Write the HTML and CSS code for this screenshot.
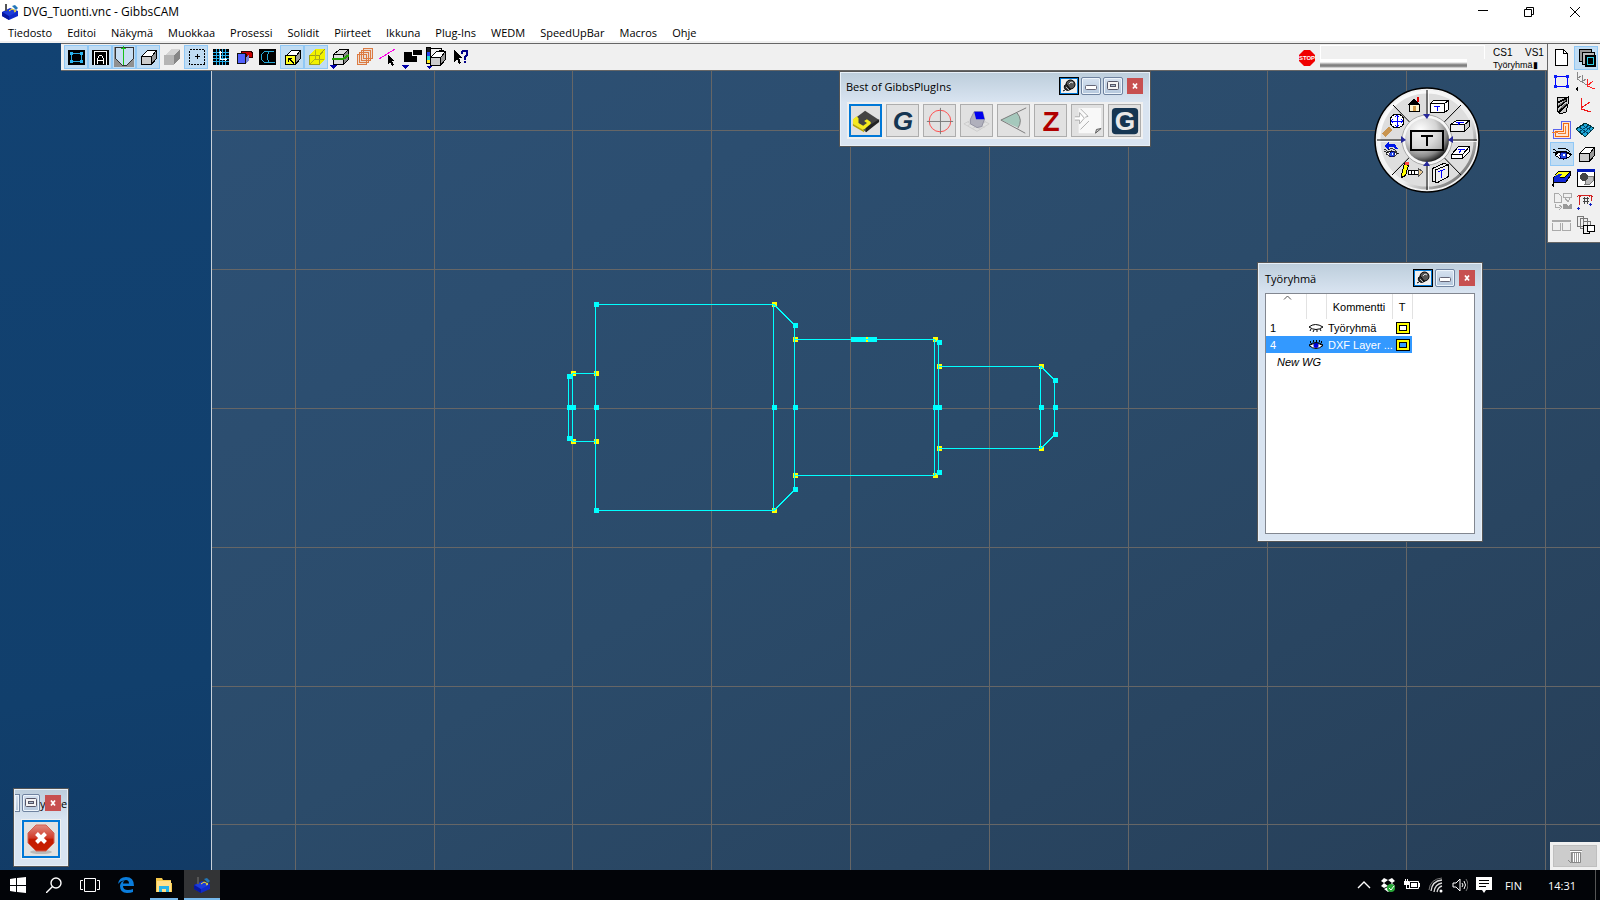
FILE: index.html
```html
<!DOCTYPE html>
<html lang="fi">
<head>
<meta charset="utf-8">
<title>DVG_Tuonti.vnc - GibbsCAM</title>
<link rel="stylesheet" href="styles.css">
</head>
<body>
<svg class="defs" aria-hidden="true">
  <defs>
    <radialGradient id="ball" cx="35%" cy="28%" r="75%"><stop offset="0" stop-color="#fff"/><stop offset=".5" stop-color="#d4d4d4"/><stop offset=".8" stop-color="#888"/><stop offset="1" stop-color="#222"/></radialGradient>
    <linearGradient id="ring" x1="0" y1="0" x2="1" y2="1"><stop offset="0" stop-color="#fff"/><stop offset=".6" stop-color="#eee"/><stop offset="1" stop-color="#444"/></linearGradient>
    <linearGradient id="red" x1="0" y1="0" x2="0" y2="1"><stop offset="0" stop-color="#e08a80"/><stop offset=".5" stop-color="#d03a28"/><stop offset=".55" stop-color="#c41a00"/><stop offset="1" stop-color="#c82000"/></linearGradient>
    <symbol id="pin" viewBox="0 0 16 14"><circle cx="9.500" cy="5.500" r="4.500" fill="#555" stroke="#000"/><path d="M3.500 6.500q-1 4 3 5l3-1-4-5z" fill="#333" stroke="#000"/><path d="M8 5l2-2 2 1" stroke="#ddd" fill="none"/><path d="M5 8l3 3" stroke="#bbb"/><path d="M2 12l2-1" stroke="#000"/></symbol>
    <symbol id="min" viewBox="0 0 16 14"><rect x="2.500" y="6.500" width="11" height="4" rx="1" fill="#fff" stroke="#667"/></symbol>
    <symbol id="max" viewBox="0 0 16 14"><rect x="2.500" y="2.500" width="11" height="8" rx="1" fill="#f4f4f4" stroke="#556"/><rect x="5.500" y="5.500" width="5" height="2" fill="#abc" stroke="#556"/></symbol>
    <symbol id="x" viewBox="0 0 16 16"><path d="M6 5.500l4 5M10 5.500l-4 5" stroke="#fff" stroke-width="1.700"/></symbol>
    <symbol id="cube" viewBox="0 0 24 24"><path d="M5.500 11.500l6-6h9v8l-5 6h-10z" fill="#fff" stroke="#000"/><path d="M15.500 11.500v8l5-6v-8z" fill="#999" stroke="#000"/><path d="M5.500 11.500h10v8h-10z" fill="#ccc" stroke="#000"/></symbol>
    <symbol id="eye" viewBox="0 0 24 24"><path d="M5 13q7-6 16 0q-7 8-16 0z" fill="#fff" stroke="#000"/><path d="M3 7l5 3M3 10l4 1M5 12q8-6 17 1M8 7q8-2 12 3" fill="none" stroke="#000"/><circle cx="13.500" cy="13.500" r="3.500" fill="#2448e8" stroke="#000060"/><path d="M13 12h2v2h-2z" fill="#fff"/></symbol>
    <symbol id="app" viewBox="0 0 16 16"><path d="M0 8l8-4 8 3v5l-9 4-7-4z" fill="#102ac8"/><path d="M0 8l7 4v4l-7-4z" fill="#0818a0"/><path d="M1 8l7-3 7 3-8 4z" fill="#1c3cd8"/><path d="M7 7l3-2 4 2-2 1" fill="none" stroke="#ffe62a"/><path d="M3 0h2v7H3z" fill="#555"/><path d="M10 2l3-1 3 3-2 2z" fill="#2377b8"/></symbol>
    <symbol id="box" viewBox="0 0 22 16"><path d="M1.500 6.500l6-4h13v6l-5 5h-14z" fill="#fff" stroke="#000"/><path d="M1.500 6.500h14v7h-14z" fill="#eee" stroke="#000"/><path d="M15.500 6.500l5-4v6l-5 5z" fill="#ccc" stroke="#000"/></symbol>
  </defs>
</svg>

<header class="titlebar">
  <svg class="app-icon" viewBox="0 0 16 16"><use href="#app"/></svg>
  <h1>DVG_Tuonti.vnc - GibbsCAM</h1>
  <div class="window-controls">
    <button aria-label="Minimize"><svg viewBox="0 0 12 12"><path d="M1 4.500h10" stroke="#000"/></svg></button>
    <button aria-label="Restore"><svg viewBox="0 0 12 12"><path d="M1.500 3.500h7v7h-7zM3.500 3V1.500h7v7H9" fill="none" stroke="#000"/></svg></button>
    <button aria-label="Close"><svg viewBox="0 0 12 12"><path d="M1 1l10 10M11 1L1 11" stroke="#000"/></svg></button>
  </div>
</header>
<nav class="menubar">
  <button>Tiedosto</button><button>Editoi</button><button>Näkymä</button><button>Muokkaa</button><button>Prosessi</button><button>Solidit</button><button>Piirteet</button><button>Ikkuna</button><button>Plug-Ins</button><button>WEDM</button><button>SpeedUpBar</button><button>Macros</button><button>Ohje</button>
</nav>

<main class="workspace">
  <svg class="drawing" aria-label="Part geometry" shape-rendering="crispEdges">
    <g transform="translate(-212,-43)">
      <path class="grid" d="M295.500 43v900M434.500 43v900M572.500 43v900M711.500 43v900M850.500 43v900M989.500 43v900M1128.500 43v900M1267.500 43v900M1406.500 43v900M1545.500 43v900M211 130.500h1500M211 269.500h1500M211 408.500h1500M211 547.500h1500M211 686.500h1500M211 824.500h1500"/>
      <path class="yellow" d="M571 371h5v5h-5zM594 371h5v5h-5zM571 439h5v5h-5zM594 439h5v5h-5zM772 302h5v5h-5zM772 508h5v5h-5zM793 337h5v5h-5zM793 473h5v5h-5zM933 337h5v5h-5zM933 473h5v5h-5zM937 364h5v5h-5zM937 446h5v5h-5zM1039 364h5v5h-5zM1039 446h5v5h-5z"/>
      <path class="geo" d="M595.500 304v207M595 304.500h179M595 510.500h179M773.500 304v207M774 304.500l21 21M774 510.500l21-21M794.500 325v165M795 339.500h140M795 475.500h140M934.500 339v137M938.500 342v131M934 339.500l4 3M934 475.500l4-3M939 366.500h102M939 448.500h102M1040.500 366v83M1041 366.500l14 14M1041 448.500l14-14M1054.500 380v55M572 373.500h23M572 441.500h23M572.500 373v69M568.500 376v63"/>
      <path class="cyan" d="M594 302h5v5h-5zM594 508h5v5h-5zM594 405h5v5h-5zM567 374h5v5h-5zM567 436h5v5h-5zM567 405h9v5h-9zM772 405h5v5h-5zM793 323h5v5h-5zM793 405h5v5h-5zM793 487h5v5h-5zM851 337h26v5h-26zM933 405h9v5h-9zM937 340h5v5h-5zM937 470h5v5h-5zM1039 405h5v5h-5zM1053 405h5v5h-5zM1053 378h5v5h-5zM1053 432h5v5h-5z"/>
      <path class="yellow" d="M866 337h2v2h-2zM866 340h2v2h-2z"/>
    </g>
  </svg>

  <div class="toolbar">
    <div class="tools">
      <button class="on" aria-label="Workgroup"><svg viewBox="0 0 24 24"><path d="M4 5h17v15H4z"/><path d="M7.500 8.500h10v8h-10z" fill="none" stroke="#2aa9e0"/><path d="M6 7h3v3H6zM16 7h3v3h-3zM6 15h3v3H6zM16 15h3v3h-3z" fill="#2ab4f0"/></svg></button>
      <button class="on" aria-label="Labels"><svg viewBox="0 0 24 24"><path d="M4 5h17v15H4z"/><path d="M6.500 20V6.500h12V20M9.500 19v-5l2-4h2l2 4v5M9.500 15.500h6" fill="none" stroke="#fff"/></svg></button>
      <button class="on" aria-label="Coordinate grid"><svg viewBox="0 0 24 24"><path d="M2 2h20v20H2z" fill="#909090"/><path d="M3.500 2.500v11l7 7h4l7-7v-11z" fill="#c8def2" stroke="#333"/><path d="M11.500 1v19M9 3.500h5" stroke="#18c018"/></svg></button>
      <button class="on" aria-label="Solid"><svg viewBox="0 0 24 24"><use href="#cube"/></svg></button>
      <button aria-label="Shaded"><svg viewBox="0 0 24 24"><path d="M4 11l7-7h9v9l-6 6H4z" fill="#d4d4d4"/><path d="M14 10l6-6v9l-6 7z" fill="#868686"/><path d="M4 10h10v10H4z" fill="#b5b5b5"/></svg></button>
      <button class="on" aria-label="Select area"><svg viewBox="0 0 24 24"><path d="M5.500 4.500h15v15h-15z" fill="none" stroke="#000" stroke-dasharray="2 1"/><path d="M11 11.500h5M13.500 9v5" stroke="#000"/></svg></button>
      <button aria-label="Grid"><svg viewBox="0 0 24 24"><path d="M5 4h16v16H5z"/><path d="M8.500 4v16M11.500 4v16M14.500 4v16M17.500 4v16M5 7.500h16M5 10.500h16M5 13.500h16M5 16.500h16" stroke="#28aee8"/><path d="M12.500 6v8.500h6M11 7.500h3M17.500 13v3" fill="none" stroke="#fff"/></svg></button>
      <button aria-label="Profile"><svg viewBox="0 0 24 24"><path d="M9.500 6.500h10l1 2v4h-6v-3h-5z" fill="#c80000" stroke="#300"/><path d="M5.500 8.500h8v10h-8z" fill="#5261ff" stroke="#111"/><path d="M14 12l3-2v5l-3 3" fill="#7b83d8"/></svg></button>
      <button aria-label="Toolpath"><svg viewBox="0 0 24 24"><path d="M3 4h17v16H3z"/><path d="M11 6.500H8.500L5.500 9.500v5l3 3h10M17.500 6.500h-4l-2 3v5l2 3M11 6.500h3" fill="none" stroke="#2aa9d8"/></svg></button>
      <button class="on" aria-label="Face select"><svg viewBox="0 0 24 24"><use href="#cube"/><path d="M5.500 10.500h10v9h-10z" fill="#ff2" stroke="#000"/><path d="M8 13h4v1h-2l4 4-1 1-4-4v2H8z"/></svg></button>
      <button class="on" aria-label="Edge select"><svg viewBox="0 0 24 24"><path d="M5 10l6-6h10v10l-6 6H5z" fill="#f2f200"/><path d="M5.500 10.500h10v9h-10zM15.500 10.500l5-6" fill="none" stroke="#a0a018"/><path d="M11.500 5v9h8M11 14l-5 5" fill="none" stroke="#b0b020"/></svg></button>
      <button aria-label="Slice"><svg viewBox="0 0 24 24"><path d="M5.500 9.500l6-5h9v10l-5 5h-10z" fill="#ddd" stroke="#000"/><path d="M15.500 9.500l5-5v10l-5 5z" fill="#888" stroke="#000"/><path d="M5 9.500h10" stroke="#000"/><path d="M4 14h11l6-4" fill="none" stroke="#20a000" stroke-width="2"/><path d="M1 20h8l-4 4z" fill="#0000a8"/></svg></button>
      <button aria-label="Layers"><svg viewBox="0 0 24 24"><path d="M11.500 3.500h9v10h-9zM9.500 5.500h9v10h-9zM7.500 7.500h9v10h-9zM5.500 9.500h9v10h-9z" fill="#e7c9b8" fill-opacity=".5" stroke="#dc7b42"/></svg></button>
      <button aria-label="Line select"><svg viewBox="0 0 24 24"><path d="M3 14L19 4" stroke="#ff00e8"/><path d="M12 10v9l2-2 2 4 2-1-2-4h3z"/></svg></button>
      <button aria-label="Blocks"><svg viewBox="0 0 24 24"><path d="M4 7h13v10H4zM13 5h9v5h-9z"/><path d="M12.500 5v5.500H17" fill="none" stroke="#fff"/><path d="M1 20h8l-4 4z" fill="#0000a8"/></svg></button>
      <button aria-label="Solid colors"><svg viewBox="0 0 24 24"><g transform="translate(1 1)"><use href="#cube" width="24" height="24"/></g><path d="M2.500 2.500h4v16h-4z" fill="#fff" stroke="#000"/><path d="M3 3h3v4H3z" fill="#222"/><path d="M3 7h3v4H3z" fill="#24e"/><path d="M3 11h3v4H3z" fill="#2dd"/><path d="M3 15h3v3H3z" fill="#fe2"/><path d="M7 3.500h10v2M15 5h5l-2 2z" fill="none" stroke="#000"/><path d="M2 21h6l-3 3z" fill="#0000a8"/></svg></button>
      <button aria-label="Help"><svg viewBox="0 0 24 24"><path d="M6 5v12l3-3 2 5 2-1-2-5h4z"/><path d="M14 9V7l1-1h4v4l-2 2v3M17 16v2" fill="none" stroke="#000088" stroke-width="2"/></svg></button>
    </div>
    <div class="status">
      <button class="stop" aria-label="Stop"><svg viewBox="0 0 16 16"><path d="M5 0h6l5 5v6l-5 5H5l-5-5V5z" fill="#f00000"/><text x="8" y="10" text-anchor="middle">STOP</text></svg></button>
      <div class="progress"><div class="progress-field"></div><div class="progress-bar"></div></div>
      <div class="coords"><span>CS1</span><span>VS1</span><strong>Työryhmä▮</strong></div>
    </div>
  </div>

  <aside class="palette">
    <button aria-label="New"><svg viewBox="0 0 24 24"><path d="M5.500 3.500h8l4 4v12h-12z" fill="#fff" stroke="#000"/><path d="M13.500 3.500v4h4" fill="none" stroke="#000"/></svg></button>
    <button class="on" aria-label="Workgroups"><svg viewBox="0 0 24 24"><path d="M5.500 3.500h12v3h-9v9h-3z" fill="#999" stroke="#000"/><path d="M8.500 6.500h12v3h-9v9h-3z" fill="#bbb" stroke="#000"/><path d="M11 9h11v12H11z"/><path d="M13.500 11.500h6v7h-6z" fill="none" stroke="#2ad0e8"/></svg></button>
    <button aria-label="Geometry"><svg viewBox="0 0 24 24"><path d="M5.500 6.500h12v10h-12z" fill="none" stroke="#00f"/><path d="M4 5h3v3H4zM16 5h3v3h-3zM4 15h3v3H4zM16 15h3v3h-3z" fill="#0a1cf8"/></svg></button>
    <button aria-label="Coordinate systems"><svg viewBox="0 0 24 24"><path d="M3.500 2v7l4 3M3 9l4-3M8.500 5v7l4 3M8 12l4-3" fill="none" stroke="#888"/><path d="M13.500 9v7l7 3M13 16l6-5" fill="none" stroke="#f22"/><path d="M4 16v5l-3-2z"/></svg></button>
    <button aria-label="Tools"><svg viewBox="0 0 24 24"><path d="M7 4l11-1v7l-2 8-6 2-3-4z" fill="#ccc" stroke="#000"/><path d="M7 9l10-5M7 14l10-8M9 18l8-8" stroke="#000" stroke-width="2" fill="none"/><path d="M8 12l8-6M9 16l8-7" stroke="#777" fill="none"/></svg></button>
    <button aria-label="Coordinate system"><svg viewBox="0 0 24 24"><path d="M7.500 4v11l9 3M7 14l9-6" fill="none" stroke="#f01818"/></svg></button>
    <button aria-label="Processes"><svg viewBox="0 0 24 24"><path d="M11.500 3.500h9v17h-17v-9h8z" fill="#ffe5d0" stroke="#5a64ec"/><path d="M13.500 5.500h5v13h-13v-5h8z" fill="none" stroke="#f06a10"/><path d="M2 14.500h6M15.500 8v7.500H8" fill="none" stroke="#f08030"/></svg></button>
    <button aria-label="Surface"><svg viewBox="0 0 24 24"><path d="M2 11l9-6 9 5-9 9z" fill="#20a8d8" stroke="#033"/><path d="M5 9l10 7M8 7l10 6M5 14l10-7M8 16l10-8" fill="none" stroke="#046"/></svg></button>
    <button class="on" aria-label="View"><svg viewBox="0 0 24 24"><use href="#eye"/></svg></button>
    <button aria-label="Solids"><svg viewBox="0 0 24 24"><use href="#cube"/></svg></button>
    <button aria-label="Machining"><svg viewBox="0 0 24 24"><path d="M3.500 11.500l5-6h12v4l-5 7h-12z" fill="#1228d8" stroke="#000"/><path d="M5 10l3-4h12l-5 5h-5l2-3H9z" fill="#ff1"/><path d="M10 11h5l5-5" fill="none" stroke="#000"/><path d="M4 16v5l-3-2z"/></svg></button>
    <button aria-label="Render"><svg viewBox="0 0 24 24"><path d="M3.500 3.500h17v17h-17z" fill="#fff" stroke="#000"/><path d="M3 3h18v3H3z" fill="#0018b8"/><path d="M12 12l2-2h5v5l-3 3h-5z" fill="#bbb" stroke="#777"/><circle cx="10" cy="11" r="4" fill="#444"/></svg></button>
    <button disabled aria-label="Post"><svg viewBox="0 0 24 24"><path d="M4.500 3.500h4l3 3v6h-7zM13.500 3.500h8v4h-8zM15 8l3 4 2-4M5.500 14v3H10M9 15l3 2-3 3" fill="none" stroke="#aaa"/><path d="M13 14h3l2 2 2-2h2v5h-9z" fill="#999"/></svg></button>
    <button aria-label="Measure"><svg viewBox="0 0 24 24"><path d="M5.500 15V5.500h12V11M3 7l2-2 2 2M15 7l2-2 2 2" fill="none" stroke="#d02020"/><path d="M9 8.500h6M9 11.500h6M10.500 7v7M13.500 7v7" stroke="#444" fill="none"/><path d="M3 18.500h3M4.500 17v3M15 14.500h3M16.500 13v3" stroke="#1020c0"/></svg></button>
    <button disabled aria-label="Tile"><svg viewBox="0 0 24 24"><path d="M2 6h19v2H2z" fill="#aaa"/><path d="M2.500 9v7.500h8V9M12.500 9v7.500h8V9" fill="none" stroke="#aaa"/></svg></button>
    <button aria-label="Parts"><svg viewBox="0 0 24 24"><path d="M3.500 2.500h6v10h-6zM6.500 4.500h7v10h-7zM9.500 7.500h7v9h-7z" fill="#eee" stroke="#777"/><path d="M9.500 11.500h6v8h-6z" fill="#eee" stroke="#000"/><path d="M13.500 11.500h7v6h-7z" fill="#fff" stroke="#000"/></svg></button>
  </aside>

  <svg class="wheel" viewBox="0 0 106 106" role="img" aria-label="View wheel">
    <circle cx="53" cy="53" r="52" fill="#f2f2f2" stroke="#000" stroke-width="1.500"/>
    <circle cx="53" cy="53" r="48" fill="#dedede" stroke="url(#ring)" stroke-width="3"/>
    <path d="M53 3v100M3 53h100M19 18l68 70M87 18L18 88" stroke="#000"/>
    <path d="M54.500 3v100M3 54.500h100" stroke="#fff" opacity=".8"/>
    <circle cx="53" cy="53" r="25" fill="#f6f6f6" stroke="#aaa"/>
    <circle cx="53" cy="53" r="22" fill="url(#ball)"/>
    <path d="M37 44h32v19H37z" fill="#ddd" fill-opacity=".5" stroke="#000" stroke-width="2"/>
    <path d="M47 49h12M53 48v11" stroke="#000" stroke-width="2"/>
    <g fill="#26289a"><path d="M49 27h7l-3 5zM49 79h7l-3-5zM27 49v7l5-3zM79 49v7l-5-3z"/></g>
    <g shape-rendering="crispEdges">
      <path d="M33 18l7-6 7 6z"/><path d="M35.500 17.500h10v7h-10z" fill="#fff6d0" stroke="#000"/><path d="M39 19h3v5h-3z" fill="#d8a050"/><path d="M43 10h2v5h-2z" fill="#d00"/>
      <path d="M8 46l7-6 3 3-7 7z" fill="#c99550"/><circle cx="23" cy="34" r="7" fill="#fff" stroke="#000"/><path d="M17 34.500h12M23.500 28v12M19 32l-2 2 2 2M27 32l2 2-2 2M21 30l2-2 2 2M21 38l2 2 2-2" stroke="#00f" fill="none"/>
      <path d="M10 59l5-4v2h6l3 5h-3l-2-2h-4v3z" fill="#0018e8"/><use href="#eye" x="8" y="57" width="18" height="18"/>
      <path d="M27.500 87.500l3-11 4 2-3 10-4 2z" fill="#ff0" stroke="#000"/><path d="M31 75h4v3h-4z" fill="#f44"/><path d="M34.500 83.500h10v4h-10z" fill="#fff" stroke="#000"/><path d="M37.500 84v3M40.500 84v3" stroke="#000"/><path d="M44 81l5 4-5 5z" fill="#e8c890" stroke="#555"/>
      <path d="M56.500 16.500l3-3h15v9l-4 3h-14z" fill="#fff" stroke="#000"/><path d="M56.500 16.500h14v9M70.500 16.500l4-3" fill="none" stroke="#000"/>
      <use href="#box" x="75" y="31" width="22" height="16"/>
      <path d="M77.500 67.500l7-8h11v5l-7 7h-11zM77.500 67.500h11v4M88.500 67.500l7-8" fill="#fff" stroke="#000"/>
      <path d="M58.500 81.500l11-5 5 1v12l-11 6-5-1zM61.500 95V83l12-5" fill="#eee" stroke="#000"/>
      <path d="M60 19.500h6M63.500 19v5M82 35.500h8M86 35l-2 3M84 62.500h7M88 62l-3 4M64 85l7-3M67.500 84v7" stroke="#00f" fill="none"/>
    </g>
  </svg>

  <section class="panel plugins" aria-labelledby="plugins-title">
    <header class="panel-head"><h2 id="plugins-title">Best of GibbsPlugIns</h2>
      <button class="pin" aria-label="Pin"><svg viewBox="0 0 16 14"><use href="#pin"/></svg></button>
      <button class="cap" aria-label="Minimize"><svg viewBox="0 0 16 14"><use href="#min"/></svg></button>
      <button class="cap" aria-label="Maximize"><svg viewBox="0 0 16 14"><use href="#max"/></svg></button>
      <button class="close" aria-label="Close"><svg viewBox="0 0 16 16"><use href="#x"/></svg></button>
    </header>
    <div class="plugin-row">
      <button class="current" aria-label="Pocket"><svg viewBox="0 0 32 32"><path d="M2 15L15 5l15 10-14 13z" fill="#444"/><path d="M16 28v-5l14-9v3z" fill="#222"/><path d="M2 14l4-3 2 2v5l5 3 4-3-3-2 3-2 4 3v2l-7 6h-2L2 19z" fill="#f5ea20"/><path d="M2 19v2l12 7v-2z" fill="#b8a800"/></svg></button>
      <button aria-label="Gibbs"><svg viewBox="0 0 32 32"><text class="g italic" x="16" y="26" text-anchor="middle">G</text></svg></button>
      <button aria-label="Center"><svg viewBox="0 0 32 32"><circle cx="16" cy="16" r="11.500" fill="none" stroke="#ff4848"/><path d="M2 16.500h28M16.500 2v28" stroke="#777"/></svg></button>
      <button aria-label="Box face"><svg viewBox="0 0 32 32"><path d="M2 19l14-7 13 7-13 8zM6 17l14 8M10 15l14 8M6 21l14-7M11 24l14-7" fill="none" stroke="#ccc"/><path d="M9 14l4-8h9l2 8-3 8-5 1-7-4z" fill="#b0b0bc" stroke="#9090a0"/><path d="M13 6h9l2 8H15z" fill="#0000ee"/></svg></button>
      <button aria-label="Angle"><svg viewBox="0 0 32 32"><path d="M2 15l17-8q7 8 1 16z" fill="#a5c8bc"/><path d="M29 2L2 15l26 14M19 7q7 8 1 17" fill="none" stroke="#777"/></svg></button>
      <button aria-label="Z"><svg viewBox="0 0 32 32"><text class="z" x="16" y="27" text-anchor="middle">Z</text></svg></button>
      <button aria-label="Convert"><svg viewBox="0 0 32 32"><path d="M6 2h24v22l-5 5H6z" fill="#f8f8f8"/><path d="M24 29l1-4 5-1z" fill="#ccc" stroke="#555"/><path d="M2 11.500h5V7l5 6-5 6v-4H2M8 3l8 8-3 1M8 25l9-9" fill="#fff" stroke="#aaa"/></svg></button>
      <button aria-label="Gibbs G"><svg viewBox="0 0 32 32"><rect x="2" y="2" width="28" height="28" rx="4" fill="#153552"/><text class="g light" x="16" y="26" text-anchor="middle">G</text></svg></button>
    </div>
  </section>

  <section class="panel workgroups" aria-labelledby="wg-title">
    <header class="panel-head"><h2 id="wg-title">Työryhmä</h2>
      <button class="pin" aria-label="Pin"><svg viewBox="0 0 16 14"><use href="#pin"/></svg></button>
      <button class="cap" aria-label="Minimize"><svg viewBox="0 0 16 14"><use href="#min"/></svg></button>
      <button class="close" aria-label="Close"><svg viewBox="0 0 16 16"><use href="#x"/></svg></button>
    </header>
    <div class="list">
      <table>
        <colgroup><col class="c-num"><col class="c-eye"><col class="c-name"><col class="c-type"></colgroup>
        <thead><tr><th aria-label="Number"><svg class="sort" viewBox="0 0 9 5"><path d="M1 4.500l3.500-3.500L8 4.500" fill="none" stroke="#555"/></svg></th><th aria-label="Visible"></th><th>Kommentti</th><th>T</th></tr></thead>
        <tbody>
          <tr><td>1</td><td><svg class="mini-eye" viewBox="0 0 16 10"><path d="M1 4q6-5 14 0q-7 5-14 0zM3 6L2 8M6 7L5 9M9 7v2M12 6l1 2" fill="#fff" stroke="#000"/></svg></td><td>Työryhmä</td><td><span class="tag"></span></td></tr>
          <tr class="selected"><td>4</td><td><svg class="mini-eye" viewBox="0 0 16 10"><path d="M1 5.500q7-4 14 0q-7 6-14 0z" fill="#fff" stroke="#000"/><path d="M2.500 3V1M5.500 2V0M8.500 2V0M11.500 2V0M13.500 3V1M1 5q7-5 14 0" stroke="#000" fill="none"/><circle cx="8" cy="5.500" r="2.500" fill="#00d"/></svg></td><td>DXF Layer ...</td><td><span class="tag"></span></td></tr>
          <tr class="new"><td colspan="4">New WG</td></tr>
        </tbody>
      </table>
    </div>
  </section>

  <section class="panel mini" aria-label="Macro">
    <header class="panel-head">
      <button class="cap cut" aria-label="Minimize"></button>
      <button class="cap" aria-label="Maximize"><svg viewBox="0 0 16 14"><use href="#max"/></svg></button>
      <span>y</span>
      <button class="close" aria-label="Close"><svg viewBox="0 0 16 16"><use href="#x"/></svg></button>
      <span>e</span>
    </header>
    <button class="cancel" aria-label="Cancel"><svg viewBox="0 0 30 30"><ellipse cx="15" cy="28" rx="11" ry="2" fill="#bbb"/><path d="M10 1h10l8 8v10l-8 8H10l-8-8V9z" fill="url(#red)" stroke="#d46050"/><path d="M10.500 9.500l9 9M19.500 9.500l-9 9" stroke="#fff" stroke-width="4"/></svg></button>
  </section>

  <div class="trash"><button aria-label="Trash" disabled><svg viewBox="0 0 16 16"><path d="M4.500 4.500h9v10h-9z" fill="#999" stroke="#888"/><path d="M3 2.500h12M1 12l3 3" fill="none" stroke="#888"/><path d="M3 3.500h12M6.500 5v9M8.500 5v9M10.500 5v9M12.500 5v9" stroke="#fff"/></svg></button></div>
</main>

<footer class="taskbar">
  <div class="tasks">
    <button aria-label="Start"><svg viewBox="0 0 16 16"><path d="M0 2l6-1v7H0zM7 1l9-1v8H7zM0 9h6v6l-6-1zM7 9h9v7l-9-1z" fill="#fff"/></svg></button>
    <button aria-label="Search"><svg viewBox="0 0 16 16"><circle cx="10" cy="6" r="5" fill="none" stroke="#fff" stroke-width="1.400"/><path d="M6.500 9.500L0 16" stroke="#fff" stroke-width="1.400"/></svg></button>
    <button aria-label="Task view"><svg class="wide" viewBox="0 0 20 16"><path d="M4.500 1.500h11v13h-11zM3 3.500H.500v9H3M17 3.500h2.500v9H17" fill="none" stroke="#fff"/></svg></button>
    <button aria-label="Edge"><svg viewBox="0 0 16 16"><path d="M0 7Q1 0 8 0q8 0 8 9H5q0 4 5 4 3 0 5-1v3q-2 1-6 1-7 0-7-7 0-4 5-6Q2 4 0 7zM5 6.500h6Q11 3 8 3 5.500 3 5 6.500z" fill="#0a7ddc"/></svg></button>
    <button class="running" aria-label="File explorer"><svg viewBox="0 0 16 16"><path d="M0 1h6l1 2h8v3h1v9H0z" fill="#f5c84b"/><path d="M1 4h14v11H1z" fill="#ffe08a"/><path d="M3 15V9h10v6h-3v-3H6v3z" fill="#26b4ea"/></svg></button>
    <button class="running active" aria-label="GibbsCAM"><svg viewBox="0 0 16 16"><use href="#app"/></svg></button>
  </div>
  <div class="tray">
    <svg class="chev" viewBox="0 0 14 16"><path d="M1 11l6-6 6 6" fill="none" stroke="#fff" stroke-width="1.400"/></svg>
    <svg viewBox="0 0 16 16"><path d="M4 1l4 2-4 3-3-2zM12 1l3 3-3 2-4-3zM4 6l4 3-4 2-3-2zM12 6l3 3-3 2-4-2zM4 12l4-2 4 2-4 3z" fill="#fff"/><circle cx="11" cy="11" r="4" fill="#28a838"/><path d="M9 11l2 2 3-4" stroke="#fff" fill="none"/></svg>
    <svg viewBox="0 0 16 16"><path d="M5.500 4.500h9v7h-9z" fill="none" stroke="#fff"/><path d="M7 6h6v4H7zM15 6h1v4h-1zM0 4h5v4H3v3h3v1H2V8H0zM1 2h1v3H1zM3 2h1v3H3z" fill="#fff"/></svg>
    <svg viewBox="0 0 16 16"><path d="M3 14Q4 4 14 3M6 15q1-8 8-9M9 15q1-5 5-6" fill="none" stroke="#ddd" stroke-width="1.300"/><path d="M1 13Q2 2 14 1" fill="none" stroke="#777"/><circle cx="13" cy="14" r="1.500" fill="#fff"/></svg>
    <svg viewBox="0 0 16 16"><path d="M1 6h3l4-4v12l-4-4H1z" fill="none" stroke="#fff"/><path d="M10 6q2 2 0 4M12 4q3 4 0 8" fill="none" stroke="#fff"/><path d="M14 2q4 6 0 12" fill="none" stroke="#777"/></svg>
    <svg viewBox="0 0 16 16"><path d="M0 0h16v13h-6l-2 3-2-3H0z" fill="#fff"/><path d="M3 3.500h10M3 6.500h10M3 9.500h7" stroke="#000"/></svg>
    <span class="lang">FIN</span><time>14:31</time>
  </div>
</footer>
</body>
</html>
```
FILE: styles.css
```css
* { box-sizing: border-box; }

body {
  margin: 0;
  min-height: 100vh;
  display: flex;
  flex-direction: column;
  overflow: hidden;
  background: #fff;
  color: #000;
  font-family: "Open Sans", "Noto Sans", sans-serif;
  font-size: 11px;
}

button {
  margin: 0;
  padding: 0;
  border: 0;
  background: none;
  color: inherit;
  font: inherit;
  display: flex;
  align-items: center;
  justify-content: center;
}

svg { display: block; flex: none; }
h1, h2 { margin: 0; font-size: inherit; font-weight: 400; }
.defs { position: absolute; width: 0; height: 0; }

/* Title and menu */
.titlebar { display: flex; align-items: center; height: 23px; padding-left: 2px; }
.titlebar h1 { font-size: 12px; }
.app-icon { width: 16px; height: 16px; margin-right: 5px; }
.window-controls { display: flex; margin-left: auto; padding-right: 2px; }
.window-controls button { width: 46px; height: 18px; }
.window-controls svg { width: 12px; height: 12px; }
.menubar { display: flex; gap: 15px; height: 20px; padding-left: 8px; border-bottom: 2px solid #f0f0f0; }

/* Workspace */
.workspace {
  position: relative;
  flex: 1;
  padding-left: 61px;
  background: linear-gradient(170deg, #124272, #113f6c 60%, #13365f);
}
.drawing {
  position: absolute;
  left: 211px;
  top: 0;
  width: calc(100% - 211px);
  height: 100%;
  border-left: 1px solid #c8d0d8;
  background: linear-gradient(150deg, #2d5176, #2b4b6a 50%, #273f58);
}
.grid { fill: none; stroke: #666; }
.geo { fill: none; stroke: #0ff; }
.cyan { fill: #0ff; }
.yellow { fill: #ff0; }

.toolbar {
  position: relative;
  display: flex;
  height: 28px;
  margin-right: 53px;
  padding: 1px 0 0 3px;
  border-top: 1px solid #666;
  border-bottom: 1px solid #666;
  background: #f0f0f0;
}
.tools { display: flex; }
.tools button, .palette button { width: 24px; height: 24px; }
.tools svg, .palette svg { width: 24px; height: 24px; overflow: visible; shape-rendering: crispEdges; }
.tools .on, .palette .on { background: #c0dcf3; box-shadow: inset 0 0 0 1px #90c8f6; }
.status { display: flex; margin-left: auto; }
.stop { width: 16px; height: 16px; margin: 5px 5px 0 0; }
.stop svg { width: 16px; height: 16px; }
.stop text { fill: #fff; font: 700 6px "Liberation Sans", sans-serif; }
.progress { width: 173px; }
.progress-field { width: 165px; height: 14px; border: solid #fff; border-width: 1px 1px 0 1px; }
.progress-bar { width: 147px; height: 9px; border-top: 2px solid #fff; background: linear-gradient(#fff 1px, #777 4px, #999 6px, #fff); }
.coords {
  display: grid;
  grid-template-columns: 32px 22px;
  align-content: start;
  height: 25px;
  font: 10px/12px "Liberation Sans", sans-serif;
  padding-top: 2px;
}
.coords strong { grid-column: 1 / 3; white-space: nowrap; font-weight: 400; font-size: 9px; }

.palette {
  position: absolute;
  right: 0;
  top: 0;
  display: grid;
  grid-template-columns: 24px 24px;
  padding: 2px 2px 4px;
  border: solid #666;
  border-width: 1px 0 1px 1px;
  background: #f0f0f0;
}

.wheel { position: absolute; right: 120px; top: 44px; width: 106px; height: 106px; }

/* Floating panels */
.panel {
  position: absolute;
  display: flex;
  flex-direction: column;
  border: 1px solid #555;
  background: linear-gradient(#bccddb, #d9e4f1 30px);
  box-shadow: inset 0 0 0 1px #e8f0f8;
}
.panel-head { display: flex; align-items: center; gap: 2px; padding: 5px 7px 0 6px; }
.panel-head h2 { flex: 1; }
.pin, .cap { width: 20px; height: 18px; }
.pin { border: 1px solid #000; background: #f0f0f0; box-shadow: inset 0 0 0 1px #0078d7; }
.cap { border: 1px solid #6f83a0; border-radius: 2px; background: linear-gradient(#d6e2f0, #b5c8dd); box-shadow: inset 0 0 0 1px #edf4fb; }
.pin svg, .cap svg { width: 16px; height: 14px; }
.close { width: 16px; height: 16px; margin-left: 2px; background: #c75050; }
.close svg { width: 16px; height: 16px; }

.plugins { left: 839px; top: 28px; width: 312px; height: 76px; }
.plugin-row { display: flex; gap: 4px; margin: 7px 7px 0; padding: 2px; background: #f0f0f0; }
.plugin-row button { width: 33px; height: 33px; border: 1px solid #adadad; background: #e1e1e1; }
.plugin-row .current { border: 2px solid #0078d7; }
.plugin-row svg { width: 30px; height: 30px; }
.g { font: 700 28px "Liberation Sans", sans-serif; fill: #153552; }
.italic { font-style: italic; }
.light { fill: #e8e8e8; }
.z { font: 700 30px "Liberation Sans", sans-serif; fill: #b00000; }

.workgroups { right: 117px; top: 219px; width: 226px; height: 280px; }
.workgroups .panel-head { padding: 6px 7px 0; }
.list { flex: 1; margin: 6px 7px 7px; border: 1px solid #828790; background: #fff; font: 11px "Liberation Sans", sans-serif; }
table { width: 146px; table-layout: fixed; border-collapse: collapse; }
.c-num { width: 40px; }
.c-eye { width: 20px; }
.c-name { width: 66px; }
.c-type { width: 20px; }
th { position: relative; height: 25px; padding: 0; border-right: 1px solid #e2e2e2; font-weight: 400; }
.sort { position: absolute; left: 17px; top: 1px; width: 9px; height: 5px; }
td { height: 17px; padding: 0 0 0 4px; white-space: nowrap; }
td:nth-child(2), td:nth-child(3) { padding-left: 2px; }
.mini-eye { width: 16px; height: 10px; }
.selected { background: #39f; color: #fff; }
.tag { display: block; width: 14px; height: 12px; border: 1px solid #000; box-shadow: inset 0 0 0 2px #ff0, inset 0 0 0 3px #000; }
.new td { padding-left: 11px; font-style: italic; }

.mini { left: 13px; bottom: 3px; width: 56px; height: 79px; }
.mini .panel-head { gap: 0; padding: 5px 2px 0 1px; }
.mini .cut { width: 5px; margin-right: 2px; border-left: 0; border-radius: 0; }
.mini .panel-head span { width: 5px; }
.mini .close { position: relative; margin: 0; }
.cancel { width: 38px; height: 38px; margin: 8px 0 0 8px; border: 2px solid #0078d7; background: #e1e1e1; box-shadow: 0 0 0 1px #f0f0f0; }
.cancel svg { width: 30px; height: 30px; }

.trash { position: absolute; right: 0; bottom: 0; padding: 3px; background: #f0f0f0; }
.trash button { width: 44px; height: 22px; border: 1px solid #bfbfbf; background: #ccc; }
.trash svg { width: 16px; height: 16px; }

/* Taskbar */
.taskbar { display: flex; height: 30px; background: #020408; color: #fff; }
.tasks { display: flex; }
.tasks button { width: 36px; height: 30px; }
.tasks .running { width: 40px; background: linear-gradient(#76b9ed, #76b9ed) center bottom / 28px 2px no-repeat; }
.tasks .running.active { width: 36px; background: linear-gradient(#76b9ed, #76b9ed) center bottom / 36px 2px no-repeat #333436; }
.tasks svg { width: 16px; height: 16px; }
.tasks .wide { width: 20px; }
.tray { display: flex; align-items: center; gap: 8px; margin-left: auto; margin-right: 4px; padding-right: 19px; border-right: 1px solid #555; }
.tray svg { width: 16px; height: 16px; }
.tray .chev { width: 14px; margin-right: 1px; }
.lang { margin: 0 18px 0 5px; }
```
